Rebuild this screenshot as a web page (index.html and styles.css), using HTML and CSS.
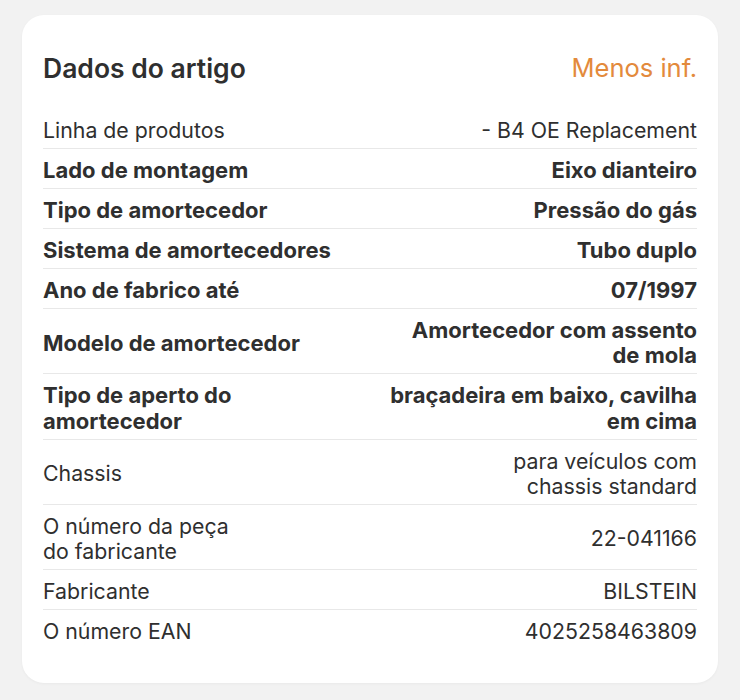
FILE: index.html
```html
<!DOCTYPE html>
<html lang="pt">
  <head>
    <meta charset="UTF-8" />
    <meta name="viewport" content="width=device-width, initial-scale=1.0" />
    <title>Dados do artigo</title>
    <link rel="stylesheet" href="styles.css">
  </head>
  <body>
    <div class="card">
      <div class="card-header">
        <h2>Dados do artigo</h2>
        <a class="toggle" href="#">Menos inf.</a>
      </div>

      <ul class="specs">
        <li><span class="label">Linha de produtos</span><span class="value">- B4 OE Replacement</span></li>
        <li class="strong"><span class="label">Lado de montagem</span><span class="value">Eixo dianteiro</span></li>
        <li class="strong"><span class="label">Tipo de amortecedor</span><span class="value">Pressão do gás</span></li>
        <li class="strong"><span class="label">Sistema de amortecedores</span><span class="value">Tubo duplo</span></li>
        <li class="strong"><span class="label">Ano de fabrico até</span><span class="value">07/1997</span></li>
        <li class="strong"><span class="label">Modelo de amortecedor</span><span class="value">Amortecedor com assento<br>de mola</span></li>
        <li class="strong"><span class="label">Tipo de aperto do<br>amortecedor</span><span class="value">braçadeira em baixo, cavilha<br>em cima</span></li>
        <li><span class="label">Chassis</span><span class="value">para veículos com<br>chassis standard</span></li>
        <li><span class="label">O número da peça<br>do fabricante</span><span class="value">22-041166</span></li>
        <li><span class="label">Fabricante</span><span class="value">BILSTEIN</span></li>
        <li><span class="label">O número EAN</span><span class="value">4025258463809</span></li>
      </ul>
    </div>
  </body>
</html>
```

FILE: styles.css
```css
body {
  margin: 0;
  padding: 15px 22px 17px;
  background-color: #f2f2f2;
  font-family: "Inter", "Noto Sans", sans-serif;
  color: #2f2f2f;
}
.card {
  background-color: #fff;
  border-radius: 22px;
  padding: 38px 21px 34px;
  box-shadow: 0 1px 3px rgba(0, 0, 0, 0.04);
}
.card-header {
  display: flex;
  justify-content: space-between;
  align-items: center;
  margin-bottom: 26px;
}
.card-header h2 {
  margin: 0;
  font-size: 26.5px;
  line-height: 30px;
  font-weight: 600;
}
.toggle {
  color: #e38a3c;
  font-size: 25.5px;
  line-height: 30px;
  text-decoration: none;
}
.specs {
  list-style: none;
  margin: 0;
  padding: 0;
}
.specs li {
  display: flex;
  justify-content: space-between;
  align-items: center;
  gap: 16px;
  padding: 9px 0 4.75px;
  font-size: 21.3px;
  line-height: 25.25px;
  border-bottom: 1px solid #e8e8e8;
}
.specs li:last-child {
  border-bottom: none;
}
.specs li.strong {
  font-size: 22px;
  font-weight: 700;
}
.value {
  text-align: right;
}
```
